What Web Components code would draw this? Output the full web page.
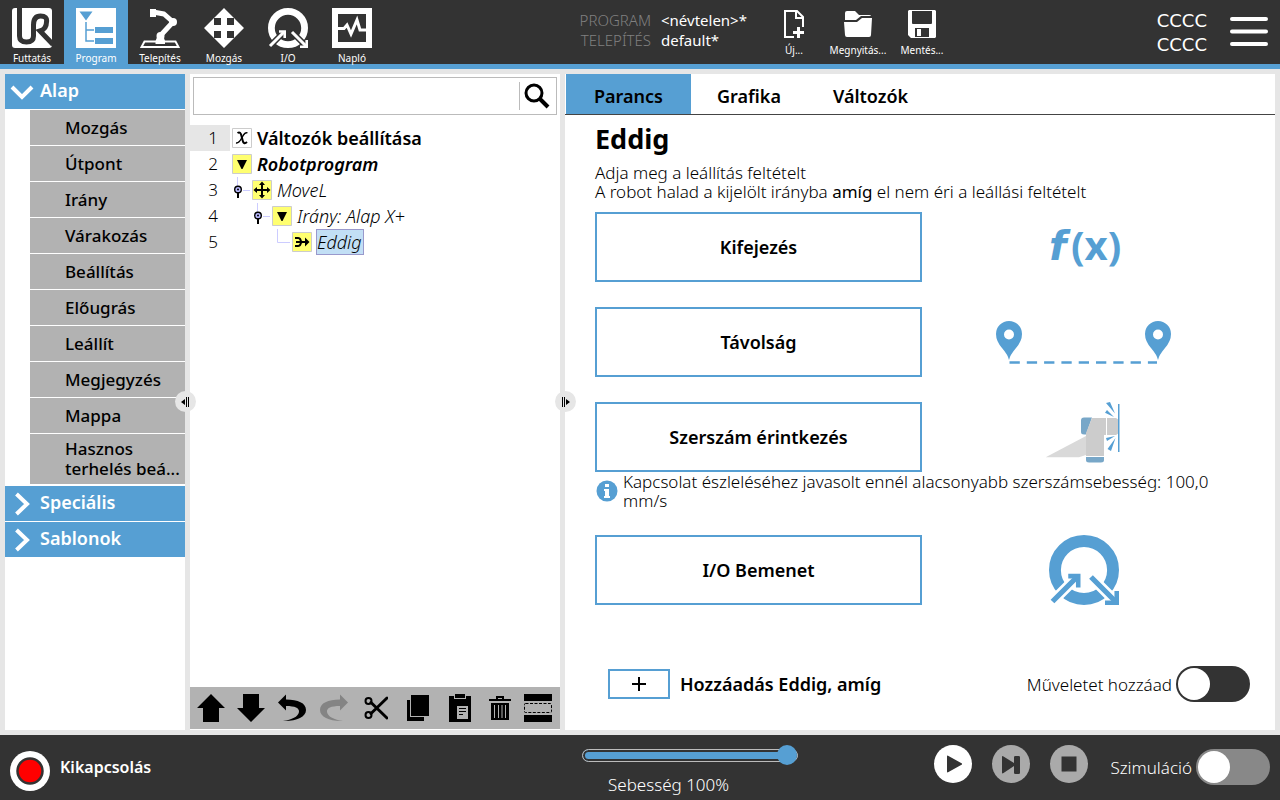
<!DOCTYPE html>
<html lang="hu">
<head>
<meta charset="utf-8">
<title>Program - Eddig</title>
<style>
  body {
    margin: 0;
    font-family: "Noto Sans", "DejaVu Sans", sans-serif;
    font-size: 17px;
    color: #000;
    background: #e6e6e6;
  }
</style>
</head>
<body>
<robot-app></robot-app>

<script>
const BLUE = '#569fd3';

// [width, height, markup]
const ICONS = {
  run: [40, 40, `<rect width="40" height="40" rx="3" fill="#fff"/>
    <path d="M7.500 0V28Q7.500 34 14.500 34T21.500 28V17Q21.500 8 28.500 8T34.500 14Q34.500 21 28 23L41 36.500" fill="none" stroke="#333" stroke-width="5"/>`],
  program: [40, 40, `<path fill="#fff" d="M0 0H40V40H0Z"/><path fill="${BLUE}" d="M3.500 3.500H16.500L10 12.500ZM19 19H37V25H19ZM19 30H37V36H19Z"/>
    <path d="M10 14V33H18M10 22H18" fill="none" stroke="${BLUE}" stroke-width="1.500"/>`],
  install: [40, 40, `<path d="M4.500 33.500H35.500L38.500 39H1.500Z" fill="none" stroke="#fff" stroke-width="2"/>
    <path d="M15.500 36V33L18 27H23L25 33V36Z" fill="#fff"/><circle cx="20.500" cy="28" r="4" fill="#fff"/>
    <path d="M13 4L24 6L33 14L21 27" fill="none" stroke="#fff" stroke-width="5" stroke-linejoin="round" stroke-linecap="round"/>
    <circle cx="33" cy="14" r="4" fill="#fff"/><path d="M10 1H16V9H10Z" fill="#fff"/>`],
  move: [40, 40, `<path fill="#fff" d="M20 0L30 10H23V17H30V10L40 20L30 30V23H23V30H30L20 40L10 30H17V23H10V30L0 20L10 10V17H17V10H10Z"/>`],
  io: [40, 40, `<circle cx="20" cy="20" r="16.600" fill="none" stroke="currentColor" stroke-width="6.800"/>
    <path d="M2 38L17 23M23 23L40 40" fill="none" stroke="var(--gap, #333)" stroke-width="6"/>
    <path d="M2 38L16 24M24 24L38 38" fill="none" stroke="currentColor" stroke-width="3"/>
    <path d="M11 23.500H16.700V30M32 38.700H38.700V32" fill="none" stroke="currentColor" stroke-width="2.600"/>`],
  log: [40, 40, `<path d="M3 3H37V37H3Z" fill="none" stroke="#fff" stroke-width="6"/>
    <path d="M5 20.500H12L15 17L19 26L25 12L28 22H35" fill="none" stroke="#fff" stroke-width="3"/>`],
  newFile: [20, 28, `<path d="M10 27H1V1H13L19 7V17" fill="none" stroke="#fff" stroke-width="2"/><path d="M12 1V8H19" fill="none" stroke="#fff" stroke-width="2"/>
    <path d="M14.500 17V28M9 22.500H20" stroke="#fff" stroke-width="3"/>`],
  open: [28, 28, `<path fill="#fff" d="M1 3Q1 1 3 1H11L15 5H25Q27 5 27 6H17L12 10H1ZM0 12H13L18 8H28L27 25Q27 27 25 27H3Q1 27 1 25Z"/>`],
  save: [28, 28, `<path fill="#fff" fill-rule="evenodd" d="M1 0H27L28 1V27L27 28H3L0 25V1ZM4 1V13Q4 14 5 14H23Q24 14 24 13V1ZM7 18V27H21V18ZM9 19H13V26H9Z"/>`],
  menu: [38, 30, `<path d="M2 3H36M2 15.500H36M2 28H36" stroke="#fff" stroke-width="4" stroke-linecap="round"/>`],
  down: [24, 24, `<path d="M2 7L12 17L22 7" fill="none" stroke="#fff" stroke-width="4"/>`],
  right: [24, 24, `<path d="M6.500 2L17 12L6.500 22" fill="none" stroke="#fff" stroke-width="4"/>`],
  search: [26, 26, `<circle cx="10" cy="10" r="8" fill="none" stroke="#000" stroke-width="3"/><path d="M15 15L24 24" stroke="#000" stroke-width="4"/>`],
  nodeVars: [20, 20, `<path d="M.5 .5H19.500V19.500H.5Z" fill="#fff" stroke="#ccc"/>
    <path d="M5.500 5Q8.500 3 9.500 8L10.500 12Q11.500 17 15 14" fill="none" stroke="#000" stroke-width="2"/>
    <path d="M15.500 5Q13 3.500 10 9.500T4 15" fill="none" stroke="#000" stroke-width="1.400"/>`],
  nodeFold: [20, 20, `<path d="M.5 .5H19.500V19.500H.5Z" fill="#ffff70" stroke="#ccc"/><path d="M5 6H15L10.500 15H9.500Z"/>`],
  nodeMove: [20, 20, `<path d="M.5 .5H19.500V19.500H.5Z" fill="#ffff70" stroke="#ccc"/><path d="M10 4V16M4 10H16" stroke="#000" stroke-width="2"/>
    <path d="M10 1.500L13 5H7ZM10 18.500L13 15H7ZM1.500 10L5 7V13ZM18.500 10L15 7V13Z"/>`],
  nodeUntil: [20, 20, `<path d="M.5 .5H19.500V19.500H.5Z" fill="#ffff70" stroke="#ccc"/>
    <path d="M3 6H6Q8 6 8.500 8T10.500 10H15M4 10H10M3 14H6Q8 14 8.500 12T10.500 10" fill="none" stroke="#000" stroke-width="2"/><path d="M13 5.500L17.500 10L13 14.500Z"/>`],
  pin: [20, 26, `<path d="M5.500 0V9M11 13.500H18" stroke="#ccf" fill="none"/><path d="M6 16V21" stroke="#000" stroke-width="2"/>
    <circle cx="6" cy="12.500" r="3.300" fill="#bbf" stroke="#000" stroke-width="1.400"/><circle cx="6" cy="12.500" r="1"/>`],
  elbow: [20, 26, `<path d="M5.500 0V13.500H18" stroke="#ccf" fill="none"/>`],
  up: [28, 28, `<path d="M14 0L28 14H22V28H6V14H0Z"/>`],
  dn: [28, 28, `<path d="M14 28L28 14H22V0H6V14H0Z"/>`],
  undo: [28, 28, `<path d="M0 8.500L8 .5V5.500C20 5.500 28 9 28 16C28 23 18 27.500 5 27C14 25.500 20 23 21 18C21.500 14 17 12 8 12V16.500Z"/>`],
  redo: [28, 28, `<path fill="#848484" d="M28 8.500L20 .5V5.500C8 5.500 0 9 0 16C0 23 10 27.500 23 27C14 25.500 8 23 7 18C6.500 14 11 12 20 12V16.500Z"/>`],
  cut: [24, 26, `<circle cx="4.500" cy="6" r="3" fill="none" stroke="#000" stroke-width="2"/><circle cx="4.500" cy="20" r="3" fill="none" stroke="#000" stroke-width="2"/>
    <path d="M7 7.500L23 23M7 18.500L23 3" stroke="#000" stroke-width="3" stroke-linecap="round"/>`],
  copy: [22, 28, `<path d="M4 1H22V22H4ZM0 6H3V23H17V27H0Z"/>`],
  paste: [22, 28, `<path d="M0 2H5V5H17V2H22V28H0ZM6 0H16V4H6Z"/><path d="M8 12H19V25H8Z" fill="#b2b2b2"/><path d="M10 14.500H17M10 17.500H17M10 20.500H14" stroke="#000"/>`],
  trash: [22, 26, `<path d="M0 4H7V1H15V4H22V6H0ZM9 3V4H13V3ZM2 8H20V25H2Z" fill-rule="evenodd"/><path d="M5.500 10V23M9.500 10V23M13 10V23M16.500 10V23" stroke="#b2b2b2"/>`],
  suppress: [28, 28, `<path d="M0 0H28V7H0ZM0 21H28V28H0Z"/><rect x=".5" y="9.500" width="27" height="9" rx="1" fill="none" stroke="#000" stroke-dasharray="3 1.500"/>`],
  fx: [80, 60, `<g fill="${BLUE}" font-weight="700" font-size="40"><text x="5" y="43" font-family="DejaVu Sans, sans-serif" font-style="italic">f</text><text x="27" y="43" font-family="Open Sans, sans-serif">(x)</text></g>`],
  distance: [176, 44, `<g fill="${BLUE}"><path fill-rule="evenodd" d="M13 40Q12 35 6 28T0 14A13 13 0 0 1 26 14Q26 21 20 28T13 40ZM13 9.500A5 5 0 1 0 13 19.500A5 5 0 1 0 13 9.500Z"/>
    <path fill-rule="evenodd" d="M162 40Q161 35 155 28T149 14A13 13 0 0 1 175 14Q175 21 169 28T162 40ZM162 9.500A5 5 0 1 0 162 19.500A5 5 0 1 0 162 9.500Z"/></g>
    <path d="M13.500 42.500H161" stroke="${BLUE}" stroke-width="2.500" stroke-dasharray="10.300 7"/>`],
  contact: [78, 70, `<path fill="#d9d9d9" d="M.7 55.300L41 34V53L34 55.300Z"/><path fill="#78a7c8" d="M47 15.500H39Q36 15.500 36 18.500V30Q36 32.500 39 32.500H41ZM41 55H59V58Q59 60.500 56 60.500H44Q41 60.500 41 58Z"/>
    <path fill="#ccc" d="M47 16H61V33H59V54H41V31ZM62 16H71L74 18V31L71 33H62Z"/>
    <path fill="${BLUE}" d="M73 2H74.500V50H73ZM61 1L65 0L70 11.500ZM60 10.700L62 8L69 15ZM61 36L70 34L62 39ZM62.500 47L66 49L70.500 36Z"/>`],
  info: [22, 22, `<circle cx="11" cy="11" r="10.500" fill="${BLUE}"/><path fill="#fff" d="M9 4H13V7H9ZM8 9H13V16H14V18H8V16H9V11H8Z"/>`],
  plus: [16, 16, `<path d="M8 1V15M1 8H15" stroke="#000" stroke-width="2"/>`],
  power: [40, 40, `<circle cx="20" cy="20" r="20" fill="#fff"/><circle cx="20" cy="20" r="12.500" fill="#f00" stroke="#333" stroke-width="2.500"/>`],
  play: [38, 38, `<circle cx="19" cy="19" r="19" fill="#fff"/><path fill="#333" d="M13 11.500Q13 10 14.500 11L28 18.500V19.500L14.500 27Q13 28 13 26.500Z"/>`],
  step: [38, 38, `<circle cx="19" cy="19" r="19" fill="#aaa"/><path fill="#333" d="M10 12Q10 10.500 11.500 11.500L22 18V12Q22 11 23.500 11H26.500Q28 11 28 12V28Q28 29 26.500 29H23.500Q22 29 22 28V21L11.500 28Q10 29 10 27.500Z"/>`],
  stop: [38, 38, `<circle cx="19" cy="19" r="19" fill="#aaa"/><path fill="#333" d="M11.500 11.500H26.500V26.500H11.500Z"/>`],
  foldLeft: [9, 12, `<path d="M0 6L4 3V9ZM5 1H6V11H5ZM7 1H8V11H7Z"/>`],
  foldRight: [9, 12, `<path d="M9 6L5 3V9ZM1 1H2V11H1ZM3 1H4V11H3Z"/>`],
};

function makeElement(name, html) {
  const template = document.createElement('template');
  template.innerHTML = html;
  customElements.define(name, class extends HTMLElement {
    constructor() {
      super();
      this.attachShadow({ mode: 'open' });
      this.shadowRoot.appendChild(template.content.cloneNode(true));
    }

    // data-text / data-icon / data-aria are filled from the host's attributes
    connectedCallback() {
      const root = this.shadowRoot;
      root.querySelectorAll('[data-text]').forEach(el => {
        el.textContent = this.getAttribute(el.dataset.text) || '';
      });
      root.querySelectorAll('[data-aria]').forEach(el => {
        el.setAttribute('aria-label', this.getAttribute(el.dataset.aria) || '');
      });
      root.querySelectorAll('[data-icon]').forEach(el => {
        const icon = this.getAttribute(el.dataset.icon);
        if (icon) {
          el.setAttribute('name', icon);
        } else {
          el.remove();
        }
      });
    }
  });
}

class UiIcon extends HTMLElement {
  static observedAttributes = ['name'];

  constructor() {
    super();
    this.attachShadow({ mode: 'open' });
  }

  attributeChangedCallback() {
    const icon = ICONS[this.getAttribute('name')];
    if (!icon) return;
    const scale = Number(this.getAttribute('size')) || icon[1];
    const w = icon[0] * scale / icon[1];
    this.shadowRoot.innerHTML = `
      <style>:host { display: inline-flex; flex: none; } svg { display: block; }</style>
      <svg width="${w}" height="${scale}" viewBox="0 0 ${icon[0]} ${icon[1]}" aria-hidden="true">${icon[2]}</svg>`;
  }
}
customElements.define('ui-icon', UiIcon);

//#region header
makeElement('nav-button', `
  <style>
    :host { display: block; width: 64px; }
    button {
      width: 100%; height: 64px; padding: 8px 0 0; border: 0;
      display: flex; flex-direction: column; align-items: center; gap: 2px;
      background: none; color: #fff; font: 10px/16px "Noto Sans", sans-serif; white-space: nowrap;
    }
    :host([active]) button { background: ${BLUE}; }
    :host([small]) button { padding-top: 10px; gap: 4px; }
  </style>
  <button type="button"><ui-icon data-icon="icon"></ui-icon><span data-text="label"></span></button>
`);

makeElement('top-bar', `
  <style>
    :host { display: grid; grid-template-columns: 579fr 701fr; background: #333; color: #fff; border-bottom: 5px solid ${BLUE}; }
    nav, .right, .files { display: flex; }
    .right { align-items: center; }
    dl { margin: 0; display: grid; grid-template-columns: 72px 111px; column-gap: 10px; font-size: 15px; line-height: 20px; padding-bottom: 4px; }
    dt { display: flex; justify-content: flex-end; color: #808080; font-weight: 300; white-space: nowrap; }
    dd { margin: 0; font-weight: 400; }
    .files { margin-left: -10px; }
    .code { margin-left: auto; text-align: right; font: 18px/24px "DejaVu Sans", sans-serif; padding-top: 2px; }
    .menu { background: none; border: 0; padding: 0; margin: 0 12px 0 23px; }
  </style>
  <nav>
    <nav-button icon="run" label="Futtatás"></nav-button>
    <nav-button icon="program" label="Program" active></nav-button>
    <nav-button icon="install" label="Telepítés"></nav-button>
    <nav-button icon="move" label="Mozgás"></nav-button>
    <nav-button icon="io" label="I/O"></nav-button>
    <nav-button icon="log" label="Napló"></nav-button>
  </nav>
  <div class="right">
    <dl><dt>PROGRAM</dt><dd>&lt;névtelen&gt;*</dd><dt>TELEPÍTÉS</dt><dd>default*</dd></dl>
    <div class="files">
      <nav-button small icon="newFile" label="Új..."></nav-button>
      <nav-button small icon="open" label="Megnyitás..."></nav-button>
      <nav-button small icon="save" label="Mentés..."></nav-button>
    </div>
    <div class="code"><div>CCCC</div><div>CCCC</div></div>
    <button class="menu" type="button" aria-label="Menü"><ui-icon name="menu"></ui-icon></button>
  </div>
`);
//#endregion

//#region node list
makeElement('node-group', `
  <style>
    :host { display: block; margin-bottom: 1px; }
    .head {
      width: 100%; height: 35px; padding: 0 0 4px; border: 0; display: flex; align-items: center;
      background: ${BLUE}; color: #fff; font: 600 18px/20px "Noto Sans", sans-serif;
    }
    .slot { width: 33px; display: flex; justify-content: center; padding: 4px 2px 0 0; }
    .items { display: none; gap: 1px; margin: 1px 0 0 25px; }
    :host([open]) { margin-bottom: 2px; }
    :host([open]) .items { display: grid; }
  </style>
  <button class="head" type="button"><span class="slot"><ui-icon data-icon="icon"></ui-icon></span><span data-text="label"></span></button>
  <div class="items"><slot></slot></div>
`);

makeElement('node-item', `
  <style>
    :host { display: block; }
    button {
      width: 100%; min-height: 35px; padding: 5px 0 5px 35px; border: 0; text-align: left;
      background: #b2b2b2; color: #000; font: 500 17px/20px "Noto Sans", sans-serif;
    }
  </style>
  <button type="button"><slot></slot></button>
`);

makeElement('node-list', `
  <style>:host { display: block; background: #fff; }</style>
  <node-group open icon="down" label="Alap">
    <node-item>Mozgás</node-item>
    <node-item>Útpont</node-item>
    <node-item>Irány</node-item>
    <node-item>Várakozás</node-item>
    <node-item>Beállítás</node-item>
    <node-item>Előugrás</node-item>
    <node-item>Leállít</node-item>
    <node-item>Megjegyzés</node-item>
    <node-item>Mappa</node-item>
    <node-item>Hasznos terhelés beá...</node-item>
  </node-group>
  <node-group icon="right" label="Speciális"></node-group>
  <node-group icon="right" label="Sablonok"></node-group>
`);
//#endregion

makeElement('pane-splitter', `
  <style>
    :host { display: block; position: relative; width: 5px; }
    button {
      position: absolute; top: 50%; left: -10px; margin-top: -11px; z-index: 1;
      width: 21px; height: 21px; padding: 0; border: 0; border-radius: 50%; background: #e6e6e6;
      display: flex; align-items: center; justify-content: center;
    }
    :host([right]) button { left: -5px; }
  </style>
  <button type="button" data-aria="label"><ui-icon data-icon="icon"></ui-icon></button>
`);

//#region program tree
makeElement('tree-row', `
  <style>
    :host { display: flex; align-items: center; height: 26px; font-size: 18px; font-weight: 300; font-style: italic; }
    .num { width: 28px; padding-right: 12px; font-size: 17px; line-height: 26px; text-align: right; font-style: normal; margin-right: 2px; }
    :host([current]) .num { background: #e6e6e6; }
    :host([bold]) .label { font-weight: 600; }
    :host([upright]) .label { font-style: normal; }
    .indent { width: calc(var(--indent, 0) * 20px); }
    .label { margin-left: 4px; padding: 0 1px 0 0; border: 1px solid transparent; line-height: 24px; white-space: nowrap; }
    :host([selected]) .label { background: #c2dff5; border-color: #99c; }
  </style>
  <span class="num" data-text="line"></span><span class="indent"></span>
  <ui-icon data-icon="branch"></ui-icon><ui-icon data-icon="icon"></ui-icon>
  <span class="label"><slot></slot></span>
`);

makeElement('program-tree', `
  <style>
    :host { display: flex; flex-direction: column; background: #fff; }
    form { display: flex; height: 36px; margin: 3px 3px 10px; border: 1px solid #bbb; }
    input { flex: 1; min-width: 0; border: 0; padding: 0 8px; font: 17px "Noto Sans", sans-serif; outline: 0; }
    form button { width: 37px; margin: 4px 0; padding: 0 2px 0 0; border: 0; border-left: 1px solid #bbb; background: none; display: flex; align-items: center; justify-content: center; }
    .tools {
      margin: auto 0 1px; height: 42px; padding: 0 3px 0 1px; background: #b2b2b2;
      display: grid; grid-template-columns: repeat(2, 40fr) repeat(5, 42fr) repeat(2, 38fr);
    }
    .tools button { padding: 0; border: 0; background: none; display: flex; align-items: center; justify-content: center; }
  </style>
  <form>
    <input type="text" aria-label="Keresés">
    <button type="button" aria-label="Keresés indítása"><ui-icon name="search"></ui-icon></button>
  </form>
  <tree-row line="1" icon="nodeVars" current bold upright>Változók beállítása</tree-row>
  <tree-row line="2" icon="nodeFold" bold>Robotprogram</tree-row>
  <tree-row line="3" icon="nodeMove" branch="pin">MoveL</tree-row>
  <tree-row line="4" icon="nodeFold" branch="pin" style="--indent: 1">Irány: Alap X+</tree-row>
  <tree-row line="5" icon="nodeUntil" branch="elbow" style="--indent: 2" selected>Eddig</tree-row>
  <div class="tools">
    <button type="button" aria-label="Fel"><ui-icon name="up"></ui-icon></button>
    <button type="button" aria-label="Le"><ui-icon name="dn"></ui-icon></button>
    <button type="button" aria-label="Visszavonás"><ui-icon name="undo"></ui-icon></button>
    <button type="button" aria-label="Újra"><ui-icon name="redo"></ui-icon></button>
    <button type="button" aria-label="Kivágás"><ui-icon name="cut"></ui-icon></button>
    <button type="button" aria-label="Másolás"><ui-icon name="copy"></ui-icon></button>
    <button type="button" aria-label="Beillesztés"><ui-icon name="paste"></ui-icon></button>
    <button type="button" aria-label="Törlés"><ui-icon name="trash"></ui-icon></button>
    <button type="button" aria-label="Letiltás"><ui-icon name="suppress"></ui-icon></button>
  </div>
`);
//#endregion

makeElement('toggle-switch', `
  <style>
    :host { display: block; }
    label { display: flex; align-items: center; gap: 4px; font-weight: 300; white-space: nowrap; }
    input {
      appearance: none; margin: 0; width: 74px; height: 36px; border-radius: 18px; padding: 2px;
      background: var(--track, #333); display: flex;
    }
    input::before { content: ""; width: 32px; height: 32px; border-radius: 50%; background: #fff; }
    input:checked { justify-content: flex-end; }
  </style>
  <label><span data-text="label"></span><input type="checkbox" role="switch"></label>
`);

//#region command panel
makeElement('until-option', `
  <style>
    :host { display: grid; grid-template-columns: minmax(0, 327px) 1fr; align-items: center; }
    button { height: 70px; border: 2px solid ${BLUE}; background: #fff; color: #000; padding: 0; font: 600 18px "Noto Sans", sans-serif; }
    .pic { display: flex; justify-content: center; color: ${BLUE}; --gap: #fff; }
    .note { grid-column: 1 / -1; }
  </style>
  <button type="button" data-text="label"></button>
  <div class="pic"><slot></slot></div>
  <div class="note"><slot name="note"></slot></div>
`);

makeElement('command-panel', `
  <style>
    :host { display: flex; flex-direction: column; background: #fff; }
    .tabs { display: flex; height: 40px; padding-left: 1px; border-bottom: 1px solid #444; }
    .tabs button { border: 0; background: none; padding: 4px 26px 0; color: #000; font: 600 18px "Noto Sans", sans-serif; }
    .tabs .active { background: ${BLUE}; padding: 4px 28px 0; }
    .body { padding: 8px 30px 0; }
    h1 { margin: 0 0 8px; font-size: 27px; line-height: 32px; }
    p { margin: 0; font-weight: 300; line-height: 19px; white-space: pre-line; }
    .options { display: grid; gap: 25px; margin-top: 11px; }
    .hint { display: flex; align-items: center; gap: 5px; padding-left: 1px; font-weight: 300; line-height: 19px; }
    .bottom { margin-top: auto; display: flex; align-items: center; padding: 0 25px 28px 43px; gap: 10px; }
    .add { width: 62px; height: 30px; padding: 0; border: 2px solid ${BLUE}; background: #fff; display: flex; align-items: center; justify-content: center; }
    .bottom label { font-size: 18px; font-weight: 600; }
    toggle-switch { margin-left: auto; }
  </style>
  <div class="tabs" role="tablist">
    <button type="button" role="tab" class="active" aria-selected="true">Parancs</button>
    <button type="button" role="tab">Grafika</button>
    <button type="button" role="tab">Változók</button>
  </div>
  <div class="body">
    <h1>Eddig</h1>
    <p>Adja meg a leállítás feltételt
A robot halad a kijelölt irányba <b>amíg</b> el nem éri a leállási feltételt</p>
    <div class="options">
      <until-option label="Kifejezés"><ui-icon name="fx"></ui-icon></until-option>
      <until-option label="Távolság"><ui-icon name="distance"></ui-icon></until-option>
      <until-option label="Szerszám érintkezés"><ui-icon name="contact"></ui-icon>
        <div class="hint" slot="note"><ui-icon name="info"></ui-icon><span>Kapcsolat észleléséhez javasolt ennél alacsonyabb szerszámsebesség: 100,0 mm/s</span></div>
      </until-option>
      <until-option label="I/O Bemenet"><ui-icon size="70" name="io"></ui-icon></until-option>
    </div>
  </div>
  <div class="bottom">
    <button class="add" id="add" type="button"><ui-icon name="plus"></ui-icon></button>
    <label for="add">Hozzáadás Eddig, amíg</label>
    <toggle-switch label="Műveletet hozzáad"></toggle-switch>
  </div>
`);
//#endregion

makeElement('bottom-bar', `
  <style>
    :host { display: grid; grid-template-columns: 582fr 698fr; height: 65px; background: #333; color: #fff; }
    .state { display: flex; align-items: center; gap: 10px; padding: 7px 0 0 10px; font-size: 16px; font-weight: 600; }
    .state button { padding: 0; border: 0; background: none; display: flex; }
    .state span { margin-bottom: 9px; }
    .right { display: flex; }
    .speed { display: flex; flex-direction: column; width: 216px; padding-top: 10px; font-weight: 300; }
    .speed label { padding-left: 26px; margin-top: 9px; line-height: 22px; white-space: nowrap; }
    input { appearance: none; width: 100%; height: 20px; margin: 0; background: none; }
    input::-webkit-slider-runnable-track {
      height: 13px; box-sizing: border-box; border: 1px solid #bbb; border-radius: 7px;
      background: ${BLUE}; box-shadow: inset 0 0 0 2px #333;
    }
    input::-webkit-slider-thumb { appearance: none; width: 20px; height: 20px; margin-top: -5px; border-radius: 50%; background: ${BLUE}; }
    .controls { display: flex; gap: 20px; margin-left: auto; padding-top: 10px; }
    .controls button { padding: 0; border: 0; height: 38px; background: none; }
    toggle-switch { --track: #888; margin: 14px 10px 0 22px; }
  </style>
  <div class="state"><button type="button" aria-label="Kikapcsolás"><ui-icon name="power"></ui-icon></button><span>Kikapcsolás</span></div>
  <div class="right">
    <div class="speed">
      <input id="speed" type="range" min="0" max="100" value="100">
      <label for="speed">Sebesség 100%</label>
    </div>
    <div class="controls">
      <button type="button" aria-label="Indítás"><ui-icon name="play"></ui-icon></button>
      <button type="button" aria-label="Léptetés"><ui-icon name="step"></ui-icon></button>
      <button type="button" aria-label="Leállítás"><ui-icon name="stop"></ui-icon></button>
    </div>
    <toggle-switch label="Szimuláció"></toggle-switch>
  </div>
`);

makeElement('robot-app', `
  <style>
    :host { display: grid; grid-template-rows: auto 1fr auto; min-height: 100vh; }
    main { display: grid; grid-template-columns: 180px 5px 370px 5px 1fr; padding: 5px; }
  </style>
  <top-bar></top-bar>
  <main>
    <node-list></node-list>
    <pane-splitter icon="foldLeft" label="Csomópontok elrejtése"></pane-splitter>
    <program-tree></program-tree>
    <pane-splitter right icon="foldRight" label="Programfa kibontása"></pane-splitter>
    <command-panel></command-panel>
  </main>
  <bottom-bar></bottom-bar>
`);
</script>
</body>
</html>
